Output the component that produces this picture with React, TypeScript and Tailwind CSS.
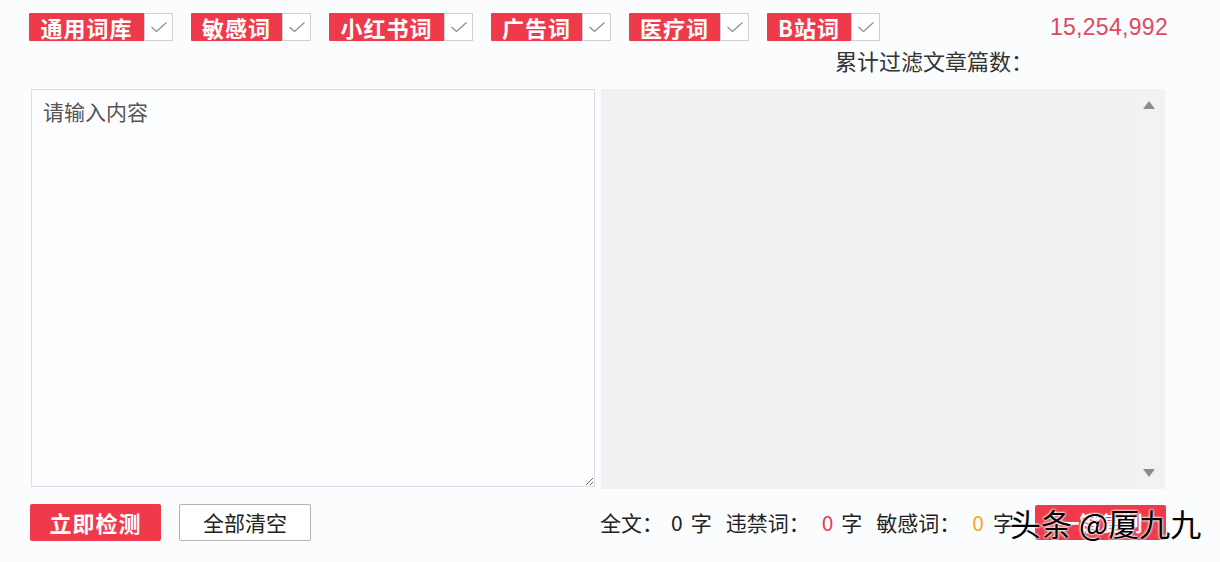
import React from "react";

const tags = [
  { label: "通用词库", w: "w-[115px]" },
  { label: "敏感词", w: "w-[91px]" },
  { label: "小红书词", w: "w-[115px]" },
  { label: "广告词", w: "w-[91px]" },
  { label: "医疗词", w: "w-[91px]" },
  { label: "B站词", w: "w-[84px]" },
];

function Check() {
  return (
    <div className="w-[29px] h-[28px] border border-[#cfcfcf] bg-white flex items-center justify-center">
      <svg width="18" height="12" viewBox="0 0 18 12" fill="none">
        <path d="M1.5 6 L6.5 10.5 L16.5 1.5" stroke="#8a8a8a" strokeWidth="1.2" />
      </svg>
    </div>
  );
}

export default function App() {
  return (
    <div
      className="relative w-[1220px] h-[562px] bg-[#fbfcfe] overflow-hidden pl-[29px] pr-[52px] pt-[13px]"
      style={{ fontFamily: '"Noto Sans CJK SC", "Noto Sans", sans-serif' }}
    >
      <div className="flex justify-between items-start">
        <div className="flex gap-[18px]">
          {tags.map((t) => (
            <div key={t.label} className="flex items-stretch">
              <div
                className={`${t.w} h-[28px] bg-[#ef3a4c] text-white font-bold text-[22px] leading-[28px] flex items-center justify-center tracking-[1px] rounded-l-[1px]`}
              >
                {t.label}
              </div>
              <Check />
            </div>
          ))}
        </div>
        <div
          className="text-[#e04a5c] text-[23px] leading-[26px] mt-[1px] tracking-[0.3px]"
          style={{ fontFamily: '"Liberation Sans", Arial, sans-serif' }}
        >
          15,254,992
        </div>
      </div>
      <div className="flex justify-end h-[48px]">
        <div className="text-[#333] text-[22px] leading-[30px] mt-[4px] mr-[135px] whitespace-nowrap">
          累计过滤文章篇数：
        </div>
      </div>

      <div className="flex gap-[6px] ml-[2px]">
        <textarea
          className="w-[564px] h-[398px] border border-[#dcdde0] bg-[#fcfdff] text-[21px] px-[11px] py-[6px] text-[#333] placeholder:text-[#555] outline-none"
          placeholder="请输入内容"
          style={{ fontFamily: '"Noto Sans CJK SC", sans-serif' }}
        />
        <div className="w-[564px] h-[400px] bg-[#f0f1f3] flex justify-end">
          <div className="w-[32px] h-full bg-[#f1f2f4] flex flex-col items-center justify-between py-[12px]">
            <svg width="12" height="8" viewBox="0 0 12 8">
              <path d="M6 0 L12 8 L0 8 Z" fill="#8c8c8c" />
            </svg>
            <svg width="12" height="8" viewBox="0 0 12 8">
              <path d="M0 0 L12 0 L6 8 Z" fill="#8c8c8c" />
            </svg>
          </div>
        </div>
      </div>

      <div className="flex items-center justify-between mt-[15px] ml-[1px]">
        <div className="flex gap-[18px]">
          <button className="w-[131px] h-[37px] bg-[#ef3a4c] text-white font-bold text-[22px] rounded-[2px] tracking-[1px]">
            立即检测
          </button>
          <button className="w-[132px] h-[37px] bg-white border border-[#b3b3b3] text-[#222] text-[21px] rounded-[2px]">
            全部清空
          </button>
        </div>
        <div className="flex items-center gap-[21px] mr-[2px]">
          <div className="flex items-center text-[21px] text-[#222] whitespace-nowrap">
            <span>全文：</span>
            <span className="ml-[8px]">0</span>
            <span className="ml-[8px]">字</span>
            <span className="ml-[14px]">违禁词：</span>
            <span className="ml-[12px] text-[#ef3a4c]">0</span>
            <span className="ml-[8px]">字</span>
            <span className="ml-[14px]">敏感词：</span>
            <span className="ml-[12px] text-[#f5a623]">0</span>
            <span className="ml-[9px]">字</span>
          </div>
          <button className="w-[131px] h-[35px] bg-[#ef3a4c] text-white font-bold text-[21px] rounded-[2px]">
            一键复制
          </button>
        </div>
      </div>

      <div className="absolute left-[1010px] top-[503px] text-[31px] leading-[40px] text-black whitespace-nowrap [text-shadow:0_0_2px_#fff,0_0_2px_#fff,0_0_3px_#fff]">
        头条 @厦九九
      </div>
    </div>
  );
}
